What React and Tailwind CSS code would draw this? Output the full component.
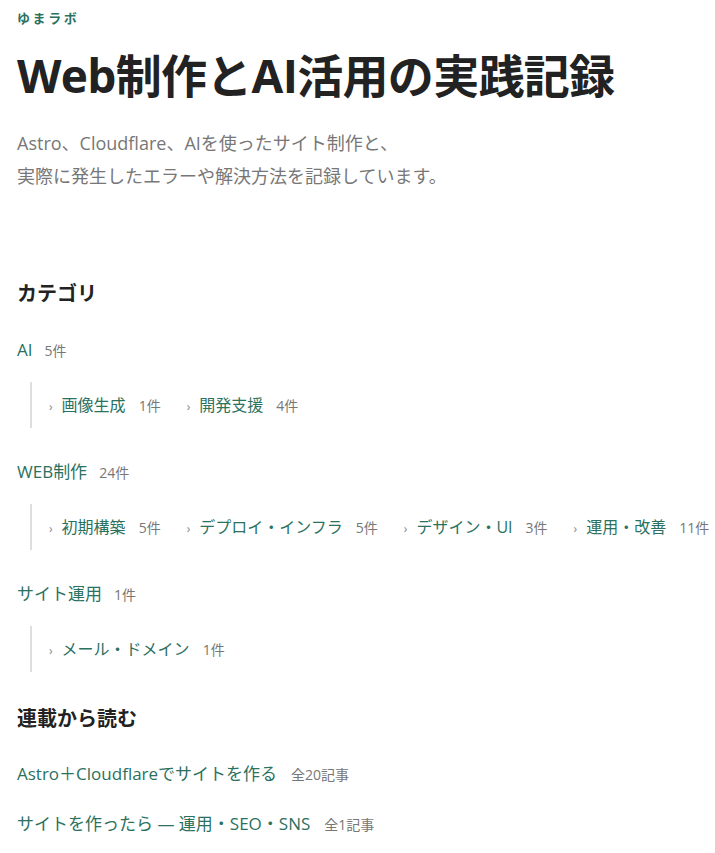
const categories = [
  {
    name: 'AI',
    count: 5,
    children: [
      { name: '画像生成', count: 1 },
      { name: '開発支援', count: 4 },
    ],
  },
  {
    name: 'WEB制作',
    count: 24,
    children: [
      { name: '初期構築', count: 5 },
      { name: 'デプロイ・インフラ', count: 5 },
      { name: 'デザイン・UI', count: 3 },
      { name: '運用・改善', count: 11 },
    ],
  },
  {
    name: 'サイト運用',
    count: 1,
    children: [{ name: 'メール・ドメイン', count: 1 }],
  },
];

const series = [
  { title: 'Astro＋Cloudflareでサイトを作る', meta: '全20記事' },
  { title: 'サイトを作ったら — 運用・SEO・SNS', meta: '全1記事' },
];

function CategoryBlock({ cat }) {
  return (
    <div className="mb-[31px]">
      <div className="flex items-baseline gap-[12px] h-[24px]">
        <a className="text-[17px] text-[#2b7160]">{cat.name}</a>
        <span className="text-[14px] text-[#777]">{cat.count}件</span>
      </div>
      <div className="mt-[21px] ml-[13px] border-l-2 border-[#dedede] h-[46px] flex items-center pl-[17px] gap-[26px] whitespace-nowrap">
        {cat.children.map((c) => (
          <div key={c.name} className="flex items-baseline">
            <span className="text-[12px] text-[#888] mr-[9px]">›</span>
            <a className="text-[16px] text-[#2b7160]">{c.name}</a>
            <span className="text-[14px] text-[#777] ml-[13px]">{c.count}件</span>
          </div>
        ))}
      </div>
    </div>
  );
}

export default function App() {
  return (
    <div
      className="bg-white min-h-[853px] px-[17px] pt-[9px] text-[#222]"
      style={{ fontFamily: '"Open Sans", "Noto Sans CJK JP", sans-serif' }}
    >
      <div className="text-[13px] font-bold tracking-[0.2em] text-[#2b7160]">ゆまラボ</div>
      <h1 className="mt-[16px] text-[46px] font-bold leading-[60px] tracking-[-0.015em] text-[#222]">
        Web制作とAI活用の実践記録
      </h1>
      <p className="mt-[22px] text-[18px] leading-[33px] text-[#777]">
        Astro、Cloudflare、AIを使ったサイト制作と、
        <br />
        実際に発生したエラーや解決方法を記録しています。
      </p>

      <h2 className="mt-[86px] text-[20px] font-bold leading-[30px]">カテゴリ</h2>
      <div className="mt-[28px]">
        {categories.map((cat) => (
          <CategoryBlock key={cat.name} cat={cat} />
        ))}
      </div>

      <h2 className="mt-[32px] text-[20px] font-bold leading-[30px]">連載から読む</h2>
      <div className="mt-[27px] flex flex-col gap-[26px]">
        {series.map((s) => (
          <div key={s.title} className="flex items-baseline gap-[14px] h-[24px]">
            <a className="text-[17px] text-[#2b7160]">{s.title}</a>
            <span className="text-[14px] text-[#777]">{s.meta}</span>
          </div>
        ))}
      </div>
    </div>
  );
}
